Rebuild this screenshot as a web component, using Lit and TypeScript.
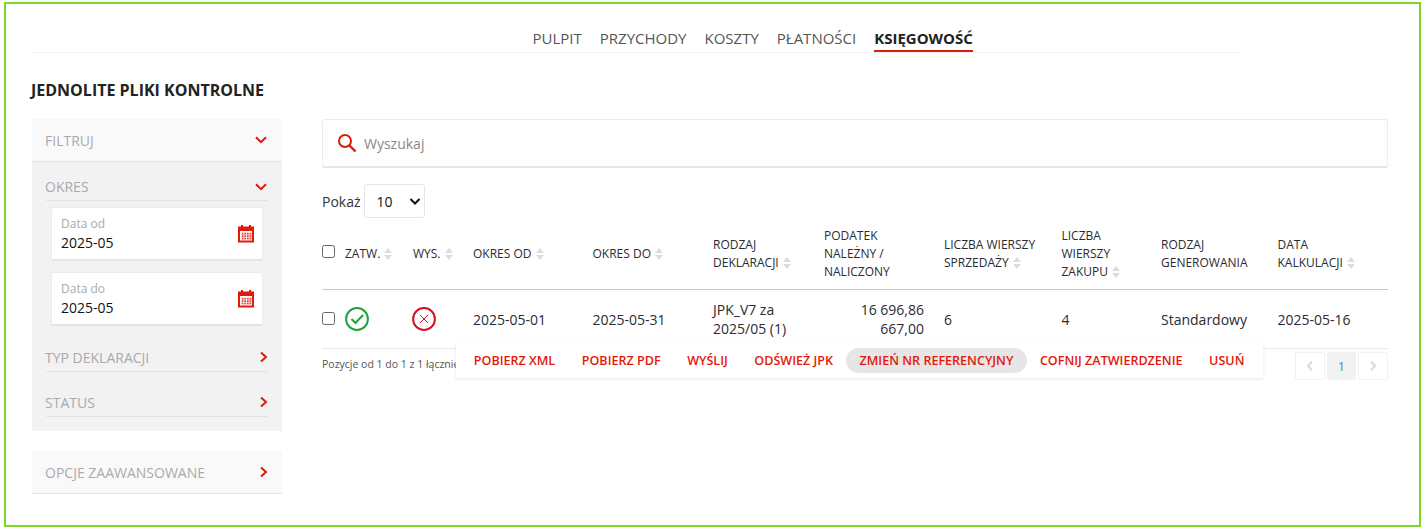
import { LitElement, html, css, svg } from "lit";
import { customElement } from "lit/decorators.js";

const RED = "#e2180a";
const chevDown = html`<svg class="chev" width="14" height="14" viewBox="0 0 14 14"><path d="M2 4.2 L7 9.2 L12 4.2" fill="none" stroke="${RED}" stroke-width="2"/></svg>`;
const chevRight = html`<svg class="chev" width="14" height="14" viewBox="0 0 14 14"><path d="M7 2.5 L12 7 L7 11.5" fill="none" stroke="${RED}" stroke-width="2"/></svg>`;
const calendar = html`<svg width="16" height="18" viewBox="0 0 16 18"><path d="M4 0v3M12 0v3" stroke="${RED}" stroke-width="2"/><rect x="1" y="2.5" width="14" height="14" fill="none" stroke="${RED}" stroke-width="2"/><rect x="1" y="2.5" width="14" height="3.5" fill="${RED}"/>${[8, 10.4, 12.8].flatMap((y) => [4, 6.6, 9.2, 11.8].map((x) => svg`<rect x="${x - 0.3}" y="${y - 0.2}" width="1.8" height="1.8" fill="${RED}" opacity=".8"/>`))}</svg>`;
const sort = html`<svg class="sort" width="8" height="12" viewBox="0 0 8 12"><path d="M4 0 L8 5 H0Z M4 12 L8 7 H0Z" fill="#dcdcdc"/></svg>`;

@customElement("app-root")
export class AppRoot extends LitElement {
  static styles = css`
    :host { display: block; font-family: "Open Sans", "Liberation Sans", sans-serif; color: #2b2b33; background: #fff; height: 530px; }
    .frame { box-sizing: border-box; height: 525px; margin: 2px 2px 0 4px; border: 2px solid #7ed628; padding: 0 31px 0 25px; position: relative; }
    .nav { display: flex; gap: 18px; height: 49px; padding-left: 501.5px; border-bottom: 1px solid #f1f1f1; width: 1207px; box-sizing: border-box; font-size: 15px; color: #555; }
    .nav span { height: 48px; line-height: 21px; padding-top: 24px; box-sizing: border-box; white-space: nowrap; }
    .nav .on { font-weight: 700; color: #222; position: relative; }
    .nav .on::after { content: ""; position: absolute; left: 0; right: 0; bottom: 0; height: 2px; background: #d9200e; }
    h1 { margin: 25px 0 17px; font-size: 16px; line-height: 24px; font-weight: 700; color: #222; }
    .cols { display: flex; gap: 40px; align-items: flex-start; margin-left: 1px; }
    .side { width: 250px; flex: none; }
    .sh { display: flex; justify-content: space-between; align-items: center; box-sizing: border-box; font-size: 14px; color: #aaa; text-indent: -1px; }
    .top { height: 43px; padding: 0 14px; background: #f9f9f9; border-bottom: 1px solid #e4e4e4; }
    .panel { background: #f2f2f2; padding: 0 14px 14px; height: 269px; box-sizing: border-box; }
    .sub { height: 39px; border-bottom: 1px solid #e2e2e2; padding-top: 11px; }
    .sub.typ { height: 46px; padding-top: 17px; }
    .sub.status { height: 45px; padding-top: 16px; }
    .dates { display: flex; flex-direction: column; gap: 11px; padding: 6px 5px 0; }
    .date { height: 54px; background: #fff; border: 1px solid #ebebeb; border-bottom: 2px solid #e4e4e4; border-radius: 2px; box-sizing: border-box; display: flex; align-items: center; justify-content: space-between; padding: 0 8px 0 9px; }
    .date label { display: block; font-size: 12px; line-height: 17px; color: #aaa; }
    .date b { display: block; font-weight: 400; font-size: 14px; line-height: 21px; color: #111; }
    .adv { margin-top: 20px; height: 43px; padding: 0 14px; background: #f9f9f9; border-bottom: 1px solid #e4e4e4; }
    .main { flex: 1; min-width: 0; position: relative; }
    .search { height: 49px; box-sizing: border-box; border: 1px solid #ececec; border-bottom: 2px solid #e6e6e6; border-radius: 2px; display: flex; align-items: center; gap: 7px; padding: 0 14px; font-size: 14px; color: #888; }
    .show { display: flex; align-items: center; gap: 3px; margin-top: 16px; font-size: 14px; height: 34px; color: #333; }
    .sel { width: 61px; height: 34px; box-sizing: border-box; border: 1px solid #e6e6e6; border-radius: 3px; display: flex; align-items: center; justify-content: space-between; padding: 0 0 0 12px; color: #111; }
    .grid { display: grid; grid-template-columns: 91px 60px 119.5px 120.5px 111px 120px 117.5px 99.5px 116.5px 110.5px; margin-top: 8px; width: 1066px; }
    .h { font-size: 12px; line-height: 18px; height: 64px; padding-bottom: 7px; border-bottom: 1px solid #c8c8c8; box-sizing: border-box; display: flex; align-items: center; color: #2b2b33; }
    .sort { margin-left: 4px; vertical-align: -2px; }
    .d { height: 59px; border-bottom: 1px solid #e8e8e8; box-sizing: border-box; font-size: 14px; line-height: 19px; display: flex; align-items: center; color: #2b2b33; }
    .cb { width: 13px; height: 13px; box-sizing: border-box; border: 1px solid #666; border-radius: 2.5px; background: #fff; margin-right: 10px; flex: none; }
    .h .cb { margin-bottom: 5px; }
    .d .cb { margin-bottom: 1px; }
    .cross { margin-left: -1px; }
    .num { text-align: right; width: 100px; }
    .foot { display: flex; justify-content: space-between; align-items: flex-start; }
    .info { font-size: 10.5px; line-height: 14px; padding-top: 8px; color: #555; white-space: nowrap; }
    .pages { display: flex; gap: 2px; margin-top: 3px; }
    .pages span { width: 29.67px; height: 28px; box-sizing: border-box; border: 1px solid #f1f1f1; border-radius: 2px; display: flex; align-items: center; justify-content: center; font-size: 12px; color: #4a7fb0; }
    .pages .cur { background: #f2f2f2; border-color: #f2f2f2; }
    .actions { position: absolute; left: 134px; top: 224px; height: 35px; width: 807px; box-sizing: border-box; background: #fff; box-shadow: 0 1px 3px rgba(0,0,0,.1); display: flex; align-items: center; padding: 0 0 0 4.5px; font-size: 12.55px; font-weight: 600; color: #e2180a; }
    .actions span { padding: 0 13.3px; line-height: 25px; border-radius: 13px; white-space: nowrap; }
    .actions .hot { background: #e6e6e6; }
  `;

  render() {
    const heads = [
      html`<span class="cb"></span><span>ZATW.${sort}</span>`,
      html`<span>WYS.${sort}</span>`,
      html`<span>OKRES OD${sort}</span>`,
      html`<span>OKRES DO${sort}</span>`,
      html`<span>RODZAJ<br />DEKLARACJI${sort}</span>`,
      html`<span>PODATEK<br />NALEŻNY /<br />NALICZONY</span>`,
      html`<span>LICZBA WIERSZY<br />SPRZEDAŻY${sort}</span>`,
      html`<span>LICZBA<br />WIERSZY<br />ZAKUPU${sort}</span>`,
      html`<span>RODZAJ<br />GENEROWANIA</span>`,
      html`<span>DATA<br />KALKULACJI${sort}</span>`,
    ];
    const cells = [
      html`<span class="cb"></span><svg width="24" height="24" viewBox="0 0 24 24"><circle cx="12" cy="12" r="10.9" fill="none" stroke="#1fa33c" stroke-width="2"/><path d="M6.5 12 L10.5 16 L18 8" fill="none" stroke="#1fa33c" stroke-width="2"/></svg>`,
      html`<svg class="cross" width="24" height="24" viewBox="0 0 24 24"><circle cx="12" cy="12" r="10.9" fill="none" stroke="#d5102c" stroke-width="2"/><path d="M8 8 L16 16 M16 8 L8 16" fill="none" stroke="#d5102c" stroke-width="1"/></svg>`,
      html`2025-05-01`,
      html`2025-05-31`,
      html`<span>JPK_V7 za<br />2025/05 (1)</span>`,
      html`<span class="num">16 696,86<br />667,00</span>`,
      html`6`,
      html`4`,
      html`Standardowy`,
      html`2025-05-16`,
    ];
    return html`<div class="frame">
      <div class="nav"><span>PULPIT</span><span>PRZYCHODY</span><span>KOSZTY</span><span>PŁATNOŚCI</span><span class="on">KSIĘGOWOŚĆ</span></div>
      <h1>JEDNOLITE PLIKI KONTROLNE</h1>
      <div class="cols">
        <aside class="side">
          <div class="sh top">FILTRUJ ${chevDown}</div>
          <div class="panel">
            <div class="sh sub">OKRES ${chevDown}</div>
            <div class="dates">
              <div class="date"><div><label>Data od</label><b>2025-05</b></div>${calendar}</div>
              <div class="date"><div><label>Data do</label><b>2025-05</b></div>${calendar}</div>
            </div>
            <div class="sh sub typ">TYP DEKLARACJI ${chevRight}</div>
            <div class="sh sub status">STATUS ${chevRight}</div>
          </div>
          <div class="sh adv">OPCJE ZAAWANSOWANE ${chevRight}</div>
        </aside>
        <main class="main">
          <div class="search"><svg width="20" height="20" viewBox="0 0 20 20"><circle cx="8" cy="8" r="6" fill="none" stroke="${RED}" stroke-width="2"/><path d="M12.5 12.5 L18.5 18.5" stroke="${RED}" stroke-width="2.4"/></svg>Wyszukaj</div>
          <div class="show">Pokaż <div class="sel">10 <svg width="18" height="18" viewBox="0 0 18 18"><path d="M4.5 7 L9 11.5 L13.5 7" fill="none" stroke="#111" stroke-width="2"/></svg></div></div>
          <div class="grid">
            ${heads.map((c) => html`<div class="h">${c}</div>`)}
            ${cells.map((c) => html`<div class="d">${c}</div>`)}
          </div>
          <div class="foot">
            <div class="info">Pozycje od 1 do 1 z 1 łącznie</div>
            <div class="pages">
              <span><svg width="8" height="12" viewBox="0 0 8 12"><path d="M6 1.5 L2 6 L6 10.5" fill="none" stroke="#ddd" stroke-width="2.2"/></svg></span>
              <span class="cur">1</span>
              <span><svg width="8" height="12" viewBox="0 0 8 12"><path d="M2 1.5 L6 6 L2 10.5" fill="none" stroke="#ddd" stroke-width="2.2"/></svg></span>
            </div>
          </div>
          <div class="actions"><span>POBIERZ XML</span><span>POBIERZ PDF</span><span>WYŚLIJ</span><span>ODŚWIEŻ JPK</span><span class="hot">ZMIEŃ NR REFERENCYJNY</span><span>COFNIJ ZATWIERDZENIE</span><span>USUŃ</span></div>
        </main>
      </div>
    </div>`;
  }
}
